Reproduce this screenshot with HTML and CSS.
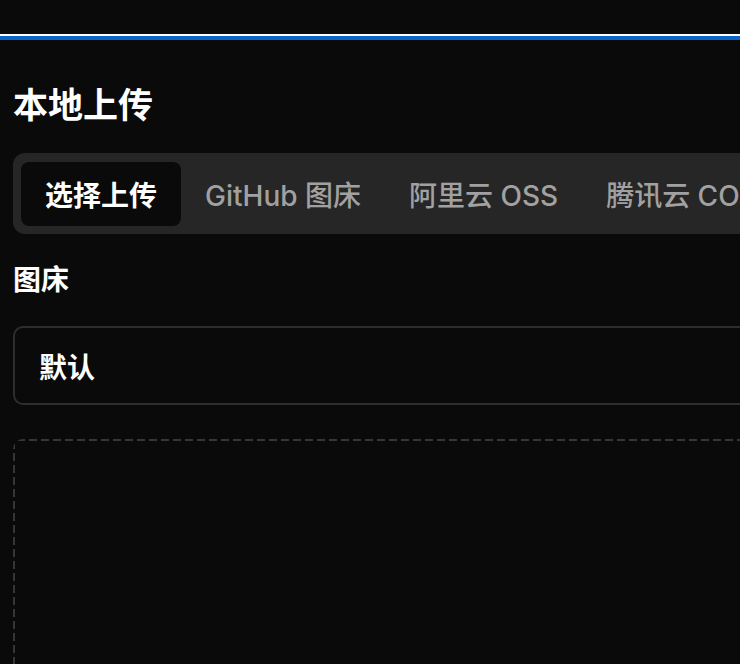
FILE: index.html
```html
<!DOCTYPE html>
<html lang="zh-CN">
<head>
<meta charset="utf-8">
<title>本地上传</title>
<link rel="stylesheet" href="styles.css">
</head>
<body>
<div class="topbar"></div>
<div class="rule-white"></div>
<div class="rule-blue"></div>
<main class="main">
  <h1 class="title">本地上传</h1>
  <div class="tabs">
    <div class="tab active">选择上传</div>
    <div class="tab">GitHub 图床</div>
    <div class="tab">阿里云 OSS</div>
    <div class="tab">腾讯云 COS</div>
  </div>
  <div class="label">图床</div>
  <div class="select">默认</div>
  <div class="dropzone"></div>
</main>
</body>
</html>
```
FILE: styles.css
```css
html, body {
  margin: 0;
  padding: 0;
  background: #0a0a0a;
  overflow: hidden;
  font-family: "Inter", "Noto Sans CJK SC", sans-serif;
  color: #fff;
}
.topbar { height: 34px; background: #0a0a0a; }
.rule-white { height: 2px; background: #ffffff; }
.rule-blue { height: 4px; background: #0b63cc; }
.main {
  width: 1100px;
  padding: 0 13px;
  box-sizing: border-box;
}
.title {
  margin: 41px 0 0;
  font-size: 35px;
  line-height: 49px;
  font-weight: 700;
}
.tabs {
  margin-top: 23px;
  display: flex;
  align-items: center;
  background: #262626;
  border-radius: 12px;
  padding: 9px 8px 8px;
  height: 81px;
  box-sizing: border-box;
}
.tab {
  height: 64px;
  display: flex;
  align-items: center;
  padding: 0 24px;
  font-size: 28px;
  font-weight: 500;
  color: #a1a1a1;
  white-space: nowrap;
  border-radius: 8px;
}
.tab.active {
  background: #0a0a0a;
  color: #fff;
  font-weight: 700;
}
.label {
  margin-top: 26px;
  font-size: 28px;
  line-height: 40px;
  font-weight: 700;
}
.select {
  margin-top: 26px;
  height: 79px;
  box-sizing: border-box;
  border: 2px solid #2e2e2e;
  border-radius: 10px;
  display: flex;
  align-items: center;
  padding: 0 24px;
  font-size: 28px;
  font-weight: 700;
}
.dropzone {
  margin-top: 34px;
  height: 400px;
  border-radius: 10px;
  background:
    repeating-linear-gradient(90deg, #363636 0 8px, transparent 8px 12px) 4px 0 / 100% 2px no-repeat,
    repeating-linear-gradient(180deg, #363636 0 8px, transparent 8px 12px) 0 2px / 2px 100% no-repeat;
}
```
